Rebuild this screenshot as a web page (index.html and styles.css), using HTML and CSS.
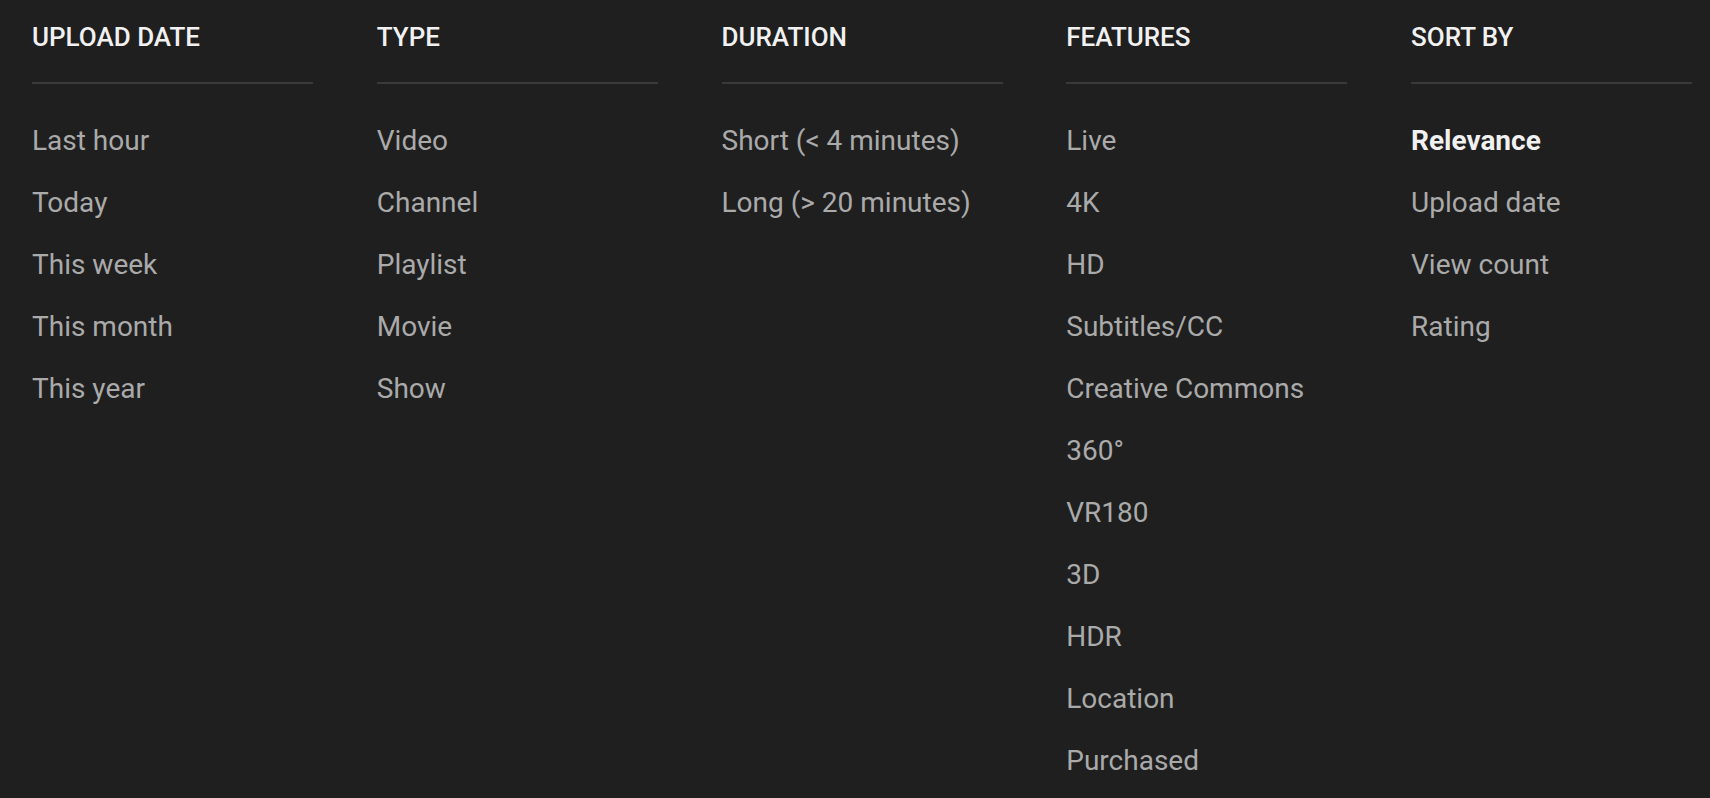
FILE: index.html
```html
<!DOCTYPE html>
<html lang="en">
<head>
  <meta charset="UTF-8" />
  <meta name="viewport" content="width=device-width, initial-scale=1.0"/>
  <title>Search filters</title>
  <link rel="stylesheet" href="styles.css">
</head>
<body>

  <!-- Filter panel -->
  <div class="filters">
    <div class="group">
      <h4>Upload date</h4>
      <a href="#">Last hour</a>
      <a href="#">Today</a>
      <a href="#">This week</a>
      <a href="#">This month</a>
      <a href="#">This year</a>
    </div>

    <div class="group">
      <h4>Type</h4>
      <a href="#">Video</a>
      <a href="#">Channel</a>
      <a href="#">Playlist</a>
      <a href="#">Movie</a>
      <a href="#">Show</a>
    </div>

    <div class="group">
      <h4>Duration</h4>
      <a href="#">Short (&lt; 4 minutes)</a>
      <a href="#">Long (&gt; 20 minutes)</a>
    </div>

    <div class="group">
      <h4>Features</h4>
      <a href="#">Live</a>
      <a href="#">4K</a>
      <a href="#">HD</a>
      <a href="#">Subtitles/CC</a>
      <a href="#">Creative Commons</a>
      <a href="#">360°</a>
      <a href="#">VR180</a>
      <a href="#">3D</a>
      <a href="#">HDR</a>
      <a href="#">Location</a>
      <a href="#">Purchased</a>
    </div>

    <div class="group">
      <h4>Sort by</h4>
      <a href="#" class="selected">Relevance</a>
      <a href="#">Upload date</a>
      <a href="#">View count</a>
      <a href="#">Rating</a>
    </div>
  </div>

</body>
</html>
```

FILE: styles.css
```css
* {
  margin: 0;
  padding: 0;
  box-sizing: border-box;
  font-family: Roboto, 'Noto Sans', sans-serif;
}

html, body {
  background: #1f1f1f;
  height: 100%;
  overflow: hidden;
}

.filters {
  display: grid;
  grid-template-columns: repeat(5, 281px);
  column-gap: 63.75px;
  padding: 17px 0 0 32px;
  align-items: start;
}

.group {
  display: flex;
  flex-direction: column;
}

.group h4 {
  color: #f1f1f1;
  font-size: 26px;
  font-weight: 500;
  line-height: 40px;
  text-transform: uppercase;
  padding-bottom: 25px;
  border-bottom: 2px solid #3a3a3a;
  margin-bottom: 26px;
}

.group a {
  color: #aaaaaa;
  font-size: 28px;
  line-height: 62px;
  text-decoration: none;
  white-space: nowrap;
}

.group a.selected {
  color: #f1f1f1;
  font-weight: 700;
}
```
